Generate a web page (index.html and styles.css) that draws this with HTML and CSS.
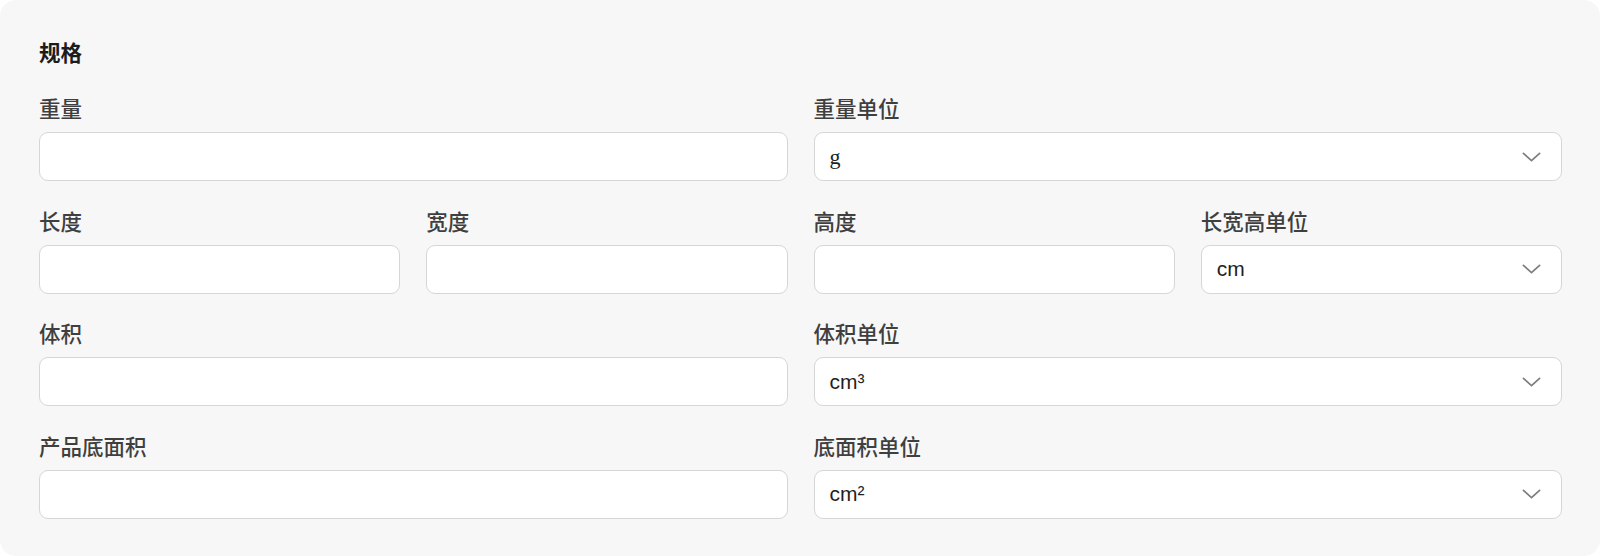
FILE: index.html
```html
<!DOCTYPE html>
<html lang="zh-CN">
<head>
<meta charset="utf-8">
<title>规格</title>
<link rel="stylesheet" href="styles.css">
</head>
<body>
<section class="card">
  <h2 class="title">规格</h2>
  <div class="grid">
    <div class="field span2">
      <label class="label">重量</label>
      <div class="input"></div>
    </div>
    <div class="field span2">
      <label class="label">重量单位</label>
      <div class="input select"><span class="value serif">g</span><svg class="chev" viewBox="0 0 20 10" width="19" height="10"><path d="M1.5 1.2 L10 8.8 L18.5 1.2" fill="none" stroke="#7d7d7d" stroke-width="1.8" stroke-linecap="round" stroke-linejoin="round"/></svg></div>
    </div>
    <div class="field">
      <label class="label">长度</label>
      <div class="input"></div>
    </div>
    <div class="field">
      <label class="label">宽度</label>
      <div class="input"></div>
    </div>
    <div class="field">
      <label class="label">高度</label>
      <div class="input"></div>
    </div>
    <div class="field">
      <label class="label">长宽高单位</label>
      <div class="input select"><span class="value">cm</span><svg class="chev" viewBox="0 0 20 10" width="19" height="10"><path d="M1.5 1.2 L10 8.8 L18.5 1.2" fill="none" stroke="#7d7d7d" stroke-width="1.8" stroke-linecap="round" stroke-linejoin="round"/></svg></div>
    </div>
    <div class="field span2">
      <label class="label">体积</label>
      <div class="input"></div>
    </div>
    <div class="field span2">
      <label class="label">体积单位</label>
      <div class="input select"><span class="value">cm³</span><svg class="chev" viewBox="0 0 20 10" width="19" height="10"><path d="M1.5 1.2 L10 8.8 L18.5 1.2" fill="none" stroke="#7d7d7d" stroke-width="1.8" stroke-linecap="round" stroke-linejoin="round"/></svg></div>
    </div>
    <div class="field span2">
      <label class="label">产品底面积</label>
      <div class="input"></div>
    </div>
    <div class="field span2">
      <label class="label">底面积单位</label>
      <div class="input select"><span class="value">cm²</span><svg class="chev" viewBox="0 0 20 10" width="19" height="10"><path d="M1.5 1.2 L10 8.8 L18.5 1.2" fill="none" stroke="#7d7d7d" stroke-width="1.8" stroke-linecap="round" stroke-linejoin="round"/></svg></div>
    </div>
  </div>
</section>
</body>
</html>
```

FILE: styles.css
```css
html, body {
  margin: 0;
  padding: 0;
  background: #ffffff;
}

body {
  font-family: "Liberation Sans", "Noto Sans CJK SC", sans-serif;
  color: #1f1f1f;
}

.card {
  box-sizing: border-box;
  width: 1600px;
  height: 556px;
  background: #f7f7f7;
  border-radius: 16px;
  padding: 39px 38px 38px 39px;
}

.title {
  margin: 0 0 26px 0;
  font-size: 21.5px;
  line-height: 30px;
  font-weight: 700;
  color: #1c1c1c;
}

.grid {
  display: grid;
  grid-template-columns: repeat(4, 1fr);
  column-gap: 26px;
  row-gap: 26.6px;
}

.span2 {
  grid-column: span 2;
}

.field {
  display: flex;
  flex-direction: column;
  gap: 7px;
}

.label {
  font-size: 21.5px;
  line-height: 30px;
  font-weight: 500;
  color: #3f3f3f;
}

.input {
  box-sizing: border-box;
  height: 49px;
  background: #ffffff;
  border: 1px solid #d6d6d6;
  border-radius: 9px;
}

.select {
  display: flex;
  align-items: center;
  justify-content: space-between;
  padding: 0 20px 0 15px;
}

.value {
  font-size: 21px;
  color: #1f1f1f;
}

.value.serif {
  font-family: "Liberation Serif", serif;
  font-size: 22px;
}

.chev {
  display: block;
}
```
